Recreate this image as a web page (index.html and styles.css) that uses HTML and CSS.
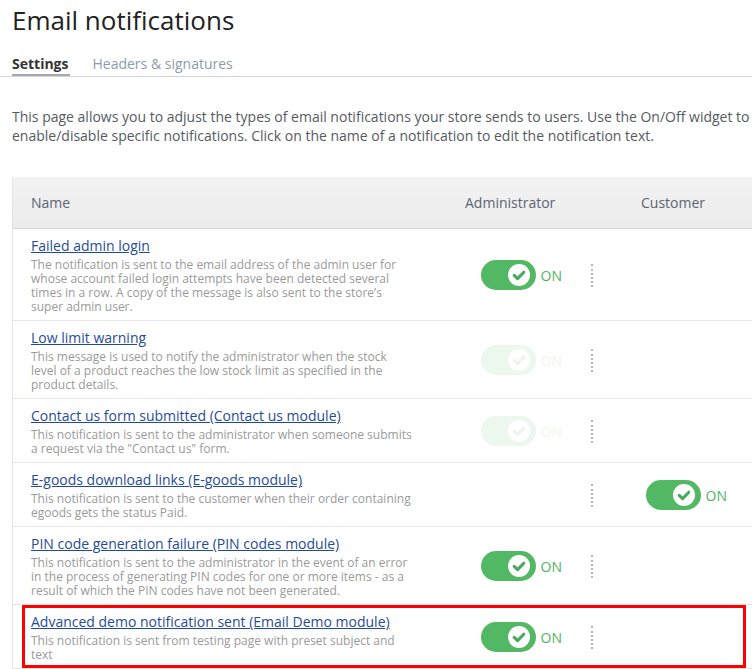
FILE: index.html
```html
<!DOCTYPE html>
<html lang="en">
<head>
<meta charset="utf-8">
<title>Email notifications</title>
<link rel="stylesheet" href="styles.css">
</head>
<body>
<div class="page">
  <h1 class="title">Email notifications</h1>
  <div class="tabs">
    <span class="tab active">Settings</span>
    <span class="tab">Headers &amp; signatures</span>
  </div>
  <p class="intro">This page allows you to adjust the types of email notifications your store sends to users. Use the On/Off widget to enable/disable specific notifications. Click on the name of a notification to edit the notification text.</p>

  <div class="table">
    <div class="row head">
      <div class="cell name-h">Name</div>
      <div class="cell col-h admin-h">Administrator</div>
      <div class="cell col-h cust-h">Customer</div>
    </div>

    <div class="row">
      <div class="cell name">
        <a class="link" href="#">Failed admin login</a>
        <div class="desc">The notification is sent to the email address of the admin user for whose account failed login attempts have been detected several times in a row. A copy of the message is also sent to the store’s super admin user.</div>
      </div>
      <div class="cell ctl">
        <span class="switch"><span class="track"><span class="knob"><svg viewBox="0 0 22 22" width="22" height="22"><path d="M6.2 11.3 L9.6 14.6 L15.8 8.2" fill="none" stroke="#47a95b" stroke-width="3" stroke-linecap="round" stroke-linejoin="round"/></svg></span></span><span class="on">ON</span></span>
        <span class="dots"></span>
      </div>
      <div class="cell ctl"></div>
    </div>

    <div class="row">
      <div class="cell name">
        <a class="link" href="#">Low limit warning</a>
        <div class="desc">This message is used to notify the administrator when the stock level of a product reaches the low stock limit as specified in the product details.</div>
      </div>
      <div class="cell ctl">
        <span class="switch faded"><span class="track"><span class="knob"><svg viewBox="0 0 22 22" width="22" height="22"><path d="M6.2 11.3 L9.6 14.6 L15.8 8.2" fill="none" stroke="#47a95b" stroke-width="3" stroke-linecap="round" stroke-linejoin="round"/></svg></span></span><span class="on">ON</span></span>
        <span class="dots"></span>
      </div>
      <div class="cell ctl"></div>
    </div>

    <div class="row">
      <div class="cell name">
        <a class="link" href="#">Contact us form submitted (Contact us module)</a>
        <div class="desc">This notification is sent to the administrator when someone submits a request via the "Contact us" form.</div>
      </div>
      <div class="cell ctl">
        <span class="switch faded"><span class="track"><span class="knob"><svg viewBox="0 0 22 22" width="22" height="22"><path d="M6.2 11.3 L9.6 14.6 L15.8 8.2" fill="none" stroke="#47a95b" stroke-width="3" stroke-linecap="round" stroke-linejoin="round"/></svg></span></span><span class="on">ON</span></span>
        <span class="dots"></span>
      </div>
      <div class="cell ctl"></div>
    </div>

    <div class="row">
      <div class="cell name">
        <a class="link" href="#">E-goods download links (E-goods module)</a>
        <div class="desc">This notification is sent to the customer when their order containing egoods gets the status Paid.</div>
      </div>
      <div class="cell ctl">
        <span class="switch empty"></span>
        <span class="dots"></span>
      </div>
      <div class="cell ctl">
        <span class="switch"><span class="track"><span class="knob"><svg viewBox="0 0 22 22" width="22" height="22"><path d="M6.2 11.3 L9.6 14.6 L15.8 8.2" fill="none" stroke="#47a95b" stroke-width="3" stroke-linecap="round" stroke-linejoin="round"/></svg></span></span><span class="on">ON</span></span>
      </div>
    </div>

    <div class="row">
      <div class="cell name">
        <a class="link" href="#">PIN code generation failure (PIN codes module)</a>
        <div class="desc">This notification is sent to the administrator in the event of an error in the process of generating PIN codes for one or more items - as a result of which the PIN codes have not been generated.</div>
      </div>
      <div class="cell ctl">
        <span class="switch"><span class="track"><span class="knob"><svg viewBox="0 0 22 22" width="22" height="22"><path d="M6.2 11.3 L9.6 14.6 L15.8 8.2" fill="none" stroke="#47a95b" stroke-width="3" stroke-linecap="round" stroke-linejoin="round"/></svg></span></span><span class="on">ON</span></span>
        <span class="dots"></span>
      </div>
      <div class="cell ctl"></div>
    </div>

    <div class="row highlighted">
      <div class="cell name">
        <a class="link" href="#">Advanced demo notification sent (Email Demo module)</a>
        <div class="desc">This notification is sent from testing page with preset subject and text</div>
      </div>
      <div class="cell ctl">
        <span class="switch"><span class="track"><span class="knob"><svg viewBox="0 0 22 22" width="22" height="22"><path d="M6.2 11.3 L9.6 14.6 L15.8 8.2" fill="none" stroke="#47a95b" stroke-width="3" stroke-linecap="round" stroke-linejoin="round"/></svg></span></span><span class="on">ON</span></span>
        <span class="dots"></span>
      </div>
      <div class="cell ctl"></div>
      <div class="mark"></div>
    </div>
  </div>
</div>
</body>
</html>
```

FILE: styles.css
```css
html, body {
  margin: 0;
  padding: 0;
  overflow: hidden;
  background: #fff;
}

body {
  font-family: "Open Sans", "DejaVu Sans", sans-serif;
  color: #333;
}

.page {
  width: 780px;
  padding: 0 0 0 12px;
}

.title {
  margin: 3px 0 0;
  font-size: 26px;
  line-height: 34px;
  font-weight: 400;
  color: #222;
}

.tabs {
  margin: 17px 0 0 -12px;
  padding-left: 12px;
  display: flex;
  gap: 22px;
  border-bottom: 1px solid #d3d3d3;
}

.tab {
  font-size: 14px;
  line-height: 20px;
  color: #8e9aab;
  border-bottom: 2px solid transparent;
}

.tab.active {
  font-weight: 700;
  color: #333;
  border-bottom-color: #a3abb5;
  padding-right: 2px;
}

.intro {
  margin: 30px 0 0;
  width: 756px;
  font-size: 14px;
  line-height: 19px;
  color: #555a61;
}

.table {
  margin-top: 32px;
  border-left: 1px solid #e4e4e4;
}

.row {
  display: grid;
  grid-template-columns: 433px 165px 165px;
  border-bottom: 1px solid #e6e6e6;
  position: relative;
}

.row.head {
  height: 51px;
  background: linear-gradient(#f3f3f3, #ebebeb);
  border-bottom: 1px solid #d6d6d6;
}

.cell {
  display: flex;
  align-items: center;
}

.name-h {
  padding-left: 18px;
  font-size: 14px;
  color: #5b6475;
}

.col-h {
  font-size: 14px;
  color: #5b6475;
}

.admin-h {
  padding-left: 19px;
}

.cust-h {
  padding-left: 30px;
}

.name {
  display: block;
  padding: 7px 32px 6px 18px;
}

.link {
  display: block;
  font-size: 14px;
  line-height: 20px;
  color: #1f4c98;
  text-decoration: underline;
}

.desc {
  margin-top: 2px;
  font-size: 12px;
  line-height: 14px;
  color: #9a9a9a;
}

.ctl {
  padding-left: 35px;
  padding-top: 1px;
}

.switch {
  display: flex;
  align-items: center;
  width: 81px;
}

.switch.faded {
  opacity: 0.1;
}

.track {
  width: 56px;
  height: 30px;
  border-radius: 15px;
  background: #53b863;
  display: flex;
  align-items: center;
  justify-content: flex-end;
  padding-right: 6px;
  box-sizing: border-box;
}

.knob {
  width: 22px;
  height: 22px;
  border-radius: 50%;
  background: #fff;
  display: block;
}

.knob svg {
  display: block;
}

.on {
  margin-left: 5px;
  font-size: 14px;
  color: #4cb464;
}

.dots {
  margin-left: 29px;
  width: 0;
  height: 23px;
  border-left: 2px dotted #b3b7bd;
}

.mark {
  position: absolute;
  left: 9px;
  top: 0;
  width: 718px;
  height: 57px;
  border: 3px solid #ff0000;
  pointer-events: none;
}
```
